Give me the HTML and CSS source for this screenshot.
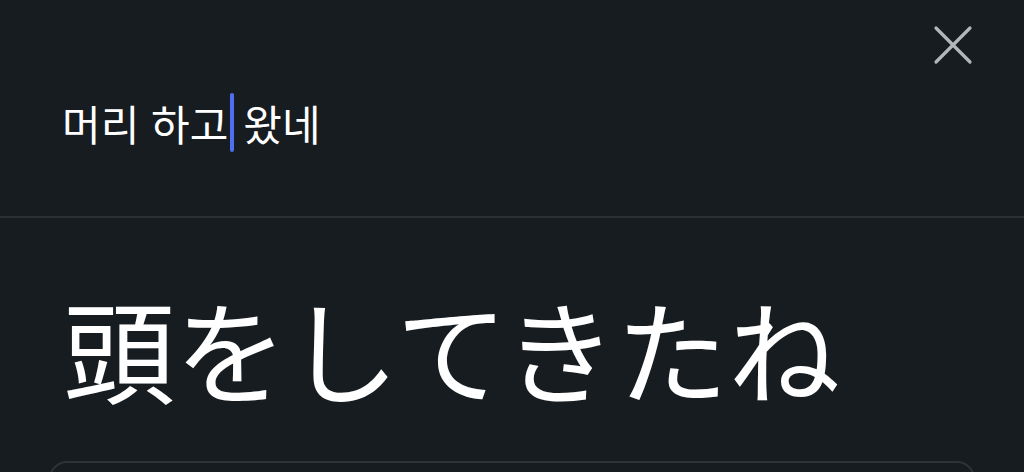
FILE: index.html
```html
<!DOCTYPE html>
<html lang="ko">
<head>
<meta charset="utf-8">
<link rel="stylesheet" href="styles.css">
</head>
<body>
<div class="screen">
  <section class="source">
    <button class="close" aria-label="닫기">
      <svg viewBox="0 0 40 40" width="40" height="40"><path d="M3 3 L37 37 M37 3 L3 37" stroke="#b3b7b9" stroke-width="3.2" stroke-linecap="round" fill="none"/></svg>
    </button>
    <div class="input"><span>머리 하고</span><span class="caret"></span><span>왔네</span></div>
  </section>
  <section class="result">
    <div class="translation" lang="ja">頭をしてきたね</div>
    <div class="card"></div>
  </section>
</div>
</body>
</html>
```
FILE: styles.css
```css
html, body {
  margin: 0;
  padding: 0;
  background: #161c20;
  overflow: hidden;
}
.screen {
  width: 1024px;
  height: 472px;
  display: flex;
  flex-direction: column;
  overflow: hidden;
}
.source {
  position: relative;
  flex-shrink: 0;
  height: 216px;
  border-bottom: 2px solid #2a3135;
  box-sizing: content-box;
  padding: 0 62px;
}
.close {
  position: absolute;
  top: 25px;
  right: 51px;
  width: 40px;
  height: 40px;
  padding: 0;
  border: 0;
  background: none;
}
.close svg { display: block; }
.input {
  padding-top: 93px;
  display: flex;
  align-items: center;
  font-family: "Noto Sans CJK KR", "Noto Sans", sans-serif;
  font-size: 42px;
  line-height: 58px;
  color: #ffffff;
  white-space: pre;
}
.caret {
  display: inline-block;
  width: 4px;
  height: 59px;
  background: #4f6ef0;
  border-radius: 2px;
  margin: 0 9px 0 2px;
}
.result {
  flex-shrink: 0;
  padding: 0 49px;
}
.translation {
  margin-top: 64px;
  padding-left: 14px;
  font-family: "Noto Sans CJK JP", "Noto Sans", sans-serif;
  font-size: 112px;
  line-height: 130px;
  color: #ffffff;
  white-space: nowrap;
}
.card {
  margin-top: 49px;
  height: 40px;
  border: 2px solid #2d3438;
  border-radius: 18px;
}
```
